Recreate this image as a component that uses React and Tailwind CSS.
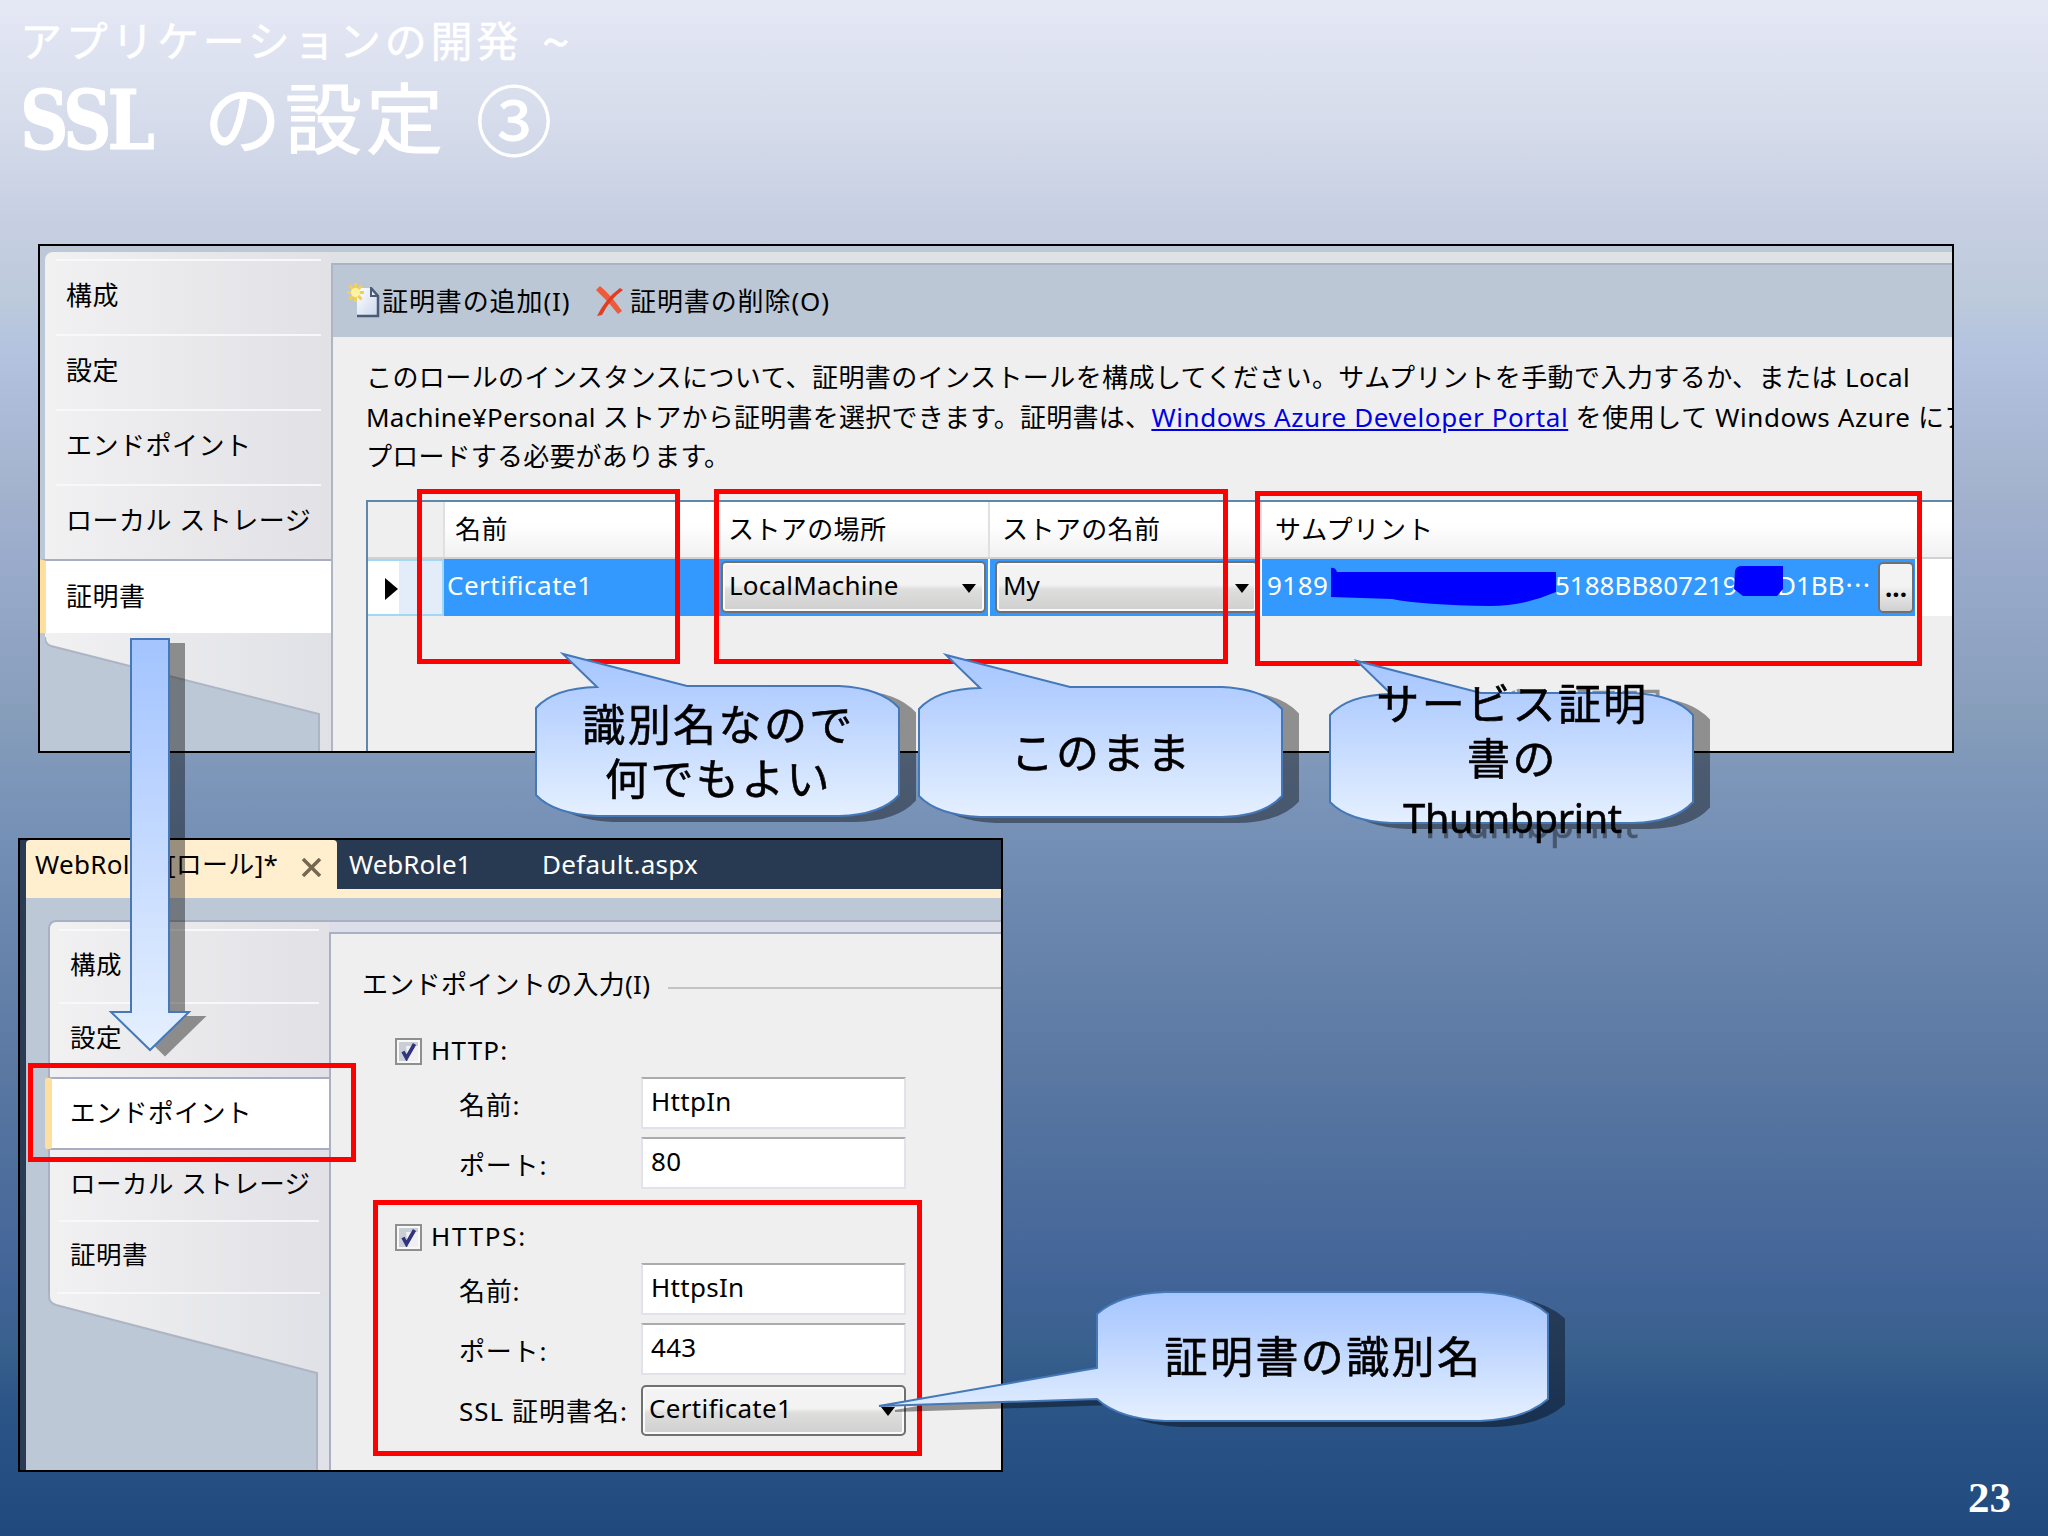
const UI_FONT = "font-['Noto_Sans','Noto_Sans_CJK_JP',sans-serif]";
const JP_FONT = "font-['Noto_Sans_CJK_JP',sans-serif]";

function RedFrame({ className }) {
  return <div className={`absolute border-[5.5px] border-[#ff0000] ${className}`} />;
}

function Callout({ className, width, height, path, id, children }) {
  return (
    <div className={`absolute drop-shadow-[16px_5px_0_rgba(0,0,0,0.4)] ${className}`}>
      <svg
        className="absolute inset-0 overflow-visible"
        width={width}
        height={height}
        viewBox={`0 0 ${width} ${height}`}
      >
        <defs>
          <linearGradient id={id} x1="0" y1="0" x2="0" y2="1">
            <stop offset="0" stopColor="#a6c6ff" />
            <stop offset="0.35" stopColor="#bad3ff" />
            <stop offset="1" stopColor="#e5f0ff" />
          </linearGradient>
        </defs>
        <path d={path} fill={`url(#${id})`} stroke="#4478b8" strokeWidth="2" />
      </svg>
      <div
        className={`relative -top-[2px] left-[1px] flex h-full flex-col items-center justify-center whitespace-nowrap text-[43px] leading-[54.5px] tracking-[2.4px] text-black [-webkit-text-stroke:0.6px_black] ${JP_FONT}`}
      >
        {children}
      </div>
    </div>
  );
}

function Combo({ className, children }) {
  return (
    <div
      className={`flex items-center justify-between rounded-[5px] border-2 border-[#707070] bg-linear-to-b from-[#f3f3f3] from-45% via-[#dededd] via-55% to-[#cfcfcf] shadow-[inset_0_0_0_2px_#fafafa] ${className}`}
    >
      <span className="pb-[3px]">{children}</span>
      <svg className="mt-[2px]" width="14" height="9" viewBox="0 0 14 9">
        <path d="M0 0h14L7 9z" fill="#000" />
      </svg>
    </div>
  );
}

function CheckBox() {
  return (
    <span className="flex h-[27px] w-[27px] items-center justify-center border-2 border-[#8e8f8f] bg-[#f8f8f8]">
      <svg width="19" height="19" viewBox="0 0 19 19">
        <rect width="19" height="19" fill="#c9ced6" />
        <path d="M7 4h12v15H9z" fill="#f0f0f2" />
        <path d="M4 9.500l3.500 6.500L15.500 2" fill="none" stroke="#31347c" strokeWidth="3.600" />
      </svg>
    </span>
  );
}

function Field({ label, value, className }) {
  return (
    <div className={`ml-[97px] flex ${className}`}>
      <span className="w-[182px] pt-[6px] leading-[44px] tracking-[0.8px]">{label}</span>
      <span className="h-[52px] w-[265px] border-2 border-[#e2e3ea] border-t-[#ababab] bg-white pl-[8px] leading-[45px]">
        {value}
      </span>
    </div>
  );
}

function CertSidebar() {
  const tabs = ["構成", "設定", "エンドポイント", "ローカル ストレージ"];
  return (
    <div className="flex w-[286px] shrink-0 flex-col tracking-[0.5px]">
      <div className="rounded-tl-[8px] bg-linear-to-r from-[#f1f1f2] to-[#e1e1e6] pt-[7px] text-[26px]">
        {tabs.map((tab) => (
          <div key={tab} className="relative flex h-[75px] items-center pb-[2px] pl-[21px]">
            <div className="absolute top-0 right-[10px] left-[11px] h-[2px] bg-[#f8f8fa]" />
            {tab}
          </div>
        ))}
      </div>
      <div className="-ml-[5px] flex h-[74px] items-center border-t-2 border-l-[6px] border-t-[#a9adc3] border-l-[#ffdf9f] bg-white pb-[1px] pl-[20px] text-[26px]">
        証明書
      </div>
      <svg width="286" height="118" viewBox="0 0 286 118">
        <defs>
          <linearGradient id="tailA" x1="0" y1="0" x2="1" y2="0">
            <stop offset="0" stopColor="#f1f1f2" />
            <stop offset="1" stopColor="#e0e1e6" />
          </linearGradient>
        </defs>
        <path d="M0 0H286V118H275V81L6 13Q0 11 0 4Z" fill="url(#tailA)" />
        <path d="M0 4Q0 11 6 13L274 81V118" fill="none" stroke="#adb5c4" strokeWidth="2" />
      </svg>
    </div>
  );
}

function Toolbar() {
  return (
    <div className="flex h-[74px] items-center border-t-2 border-[#a9b4c4] bg-[#bcc7d6] pl-[14px] text-[26px] tracking-[0.9px]">
      <svg width="34" height="36" viewBox="0 0 34 36">
        <defs>
          <linearGradient id="page" x1="0" y1="0" x2="1" y2="1">
            <stop offset="0" stopColor="#ffffff" />
            <stop offset="1" stopColor="#c9d6ec" />
          </linearGradient>
        </defs>
        <path d="M10 5h14l7 8v20H10z" fill="url(#page)" />
        <path d="M24 5l7 8v20H10" fill="none" stroke="#4b5a78" strokeWidth="2.500" />
        <path d="M24 4v9h7" fill="none" stroke="#4b5a78" strokeWidth="2" />
        <path
          d="M8.500 0v19M0 9.500h17M2.500 2.500l12 14M14.500 2.500l-12 14"
          stroke="#f0cf5a"
          strokeWidth="3"
        />
        <circle cx="8.500" cy="9.500" r="4.500" fill="#fff3a0" />
      </svg>
      <span className="ml-[1px] w-[213px] whitespace-nowrap">証明書の追加(I)</span>
      <svg width="28" height="30" viewBox="0 0 28 30">
        <path d="M1 4L5 0Q16 9 27 25L23 28Q13 15 1 4Z" fill="#ee5a3c" />
        <path d="M25 2L28 4Q15 13 7 29L2 30Q11 12 25 2Z" fill="#e23d20" />
      </svg>
      <span className="ml-[7px] whitespace-nowrap">証明書の削除(O)</span>
    </div>
  );
}

function CertGrid() {
  return (
    <div className="mt-[23px] h-[252px] border-t-2 border-l-2 border-[#5f86ab] text-[26px] whitespace-nowrap">
      <div className="flex h-[57px] items-center border-b-2 border-[#d2d2d4] bg-linear-to-b from-white from-40% to-[#f1f1f2] tracking-[0.4px]">
        <div className="h-full w-[77px] border-r-2 border-[#e0e0e0] bg-[#efefef]" />
        <div className="w-[271px] pl-[10px]">名前</div>
        <div className="flex h-full w-[274px] items-center border-r-2 border-[#e0e0e2] pl-[12px]">ストアの場所</div>
        <div className="flex h-full w-[272px] items-center border-r-2 border-[#e0e0e2] pl-[12px]">ストアの名前</div>
        <div className="pl-[13px] tracking-[0.8px]">サムプリント</div>
      </div>
      <div className="flex h-[57px] bg-white">
        <div className="flex w-[76px] items-center border-y-2 border-r-2 border-[#a3d8f5] bg-linear-to-r from-white from-42% to-[#e3edfa] to-42% pt-[3px] pl-[17px]">
          <svg width="13" height="22" viewBox="0 0 13 22">
            <path d="M0 0l13 11L0 22z" fill="#000" />
          </svg>
        </div>
        <div className="flex w-[272px] items-center bg-[#3399ff] pb-[3px] pl-[3px] tracking-[0.5px] text-white">Certificate1</div>
        <div className="flex w-[274px] items-center border-r-2 border-white bg-[#3399ff] pl-[5px]">
          <Combo className="h-[52px] w-[265px] pr-[8px] pl-[6px] tracking-[0.2px]">LocalMachine</Combo>
        </div>
        <div className="flex w-[272px] items-center border-r-2 border-white bg-[#3399ff] pl-[5px]">
          <Combo className="h-[52px] w-[263px] pr-[7px] pl-[6px]">My</Combo>
        </div>
        <div className="relative flex w-[653px] items-center justify-between bg-[#3399ff] pr-[1px] pl-[5px] text-white">
          <span className="flex pb-[3px]">
            <span className="w-[288px] tracking-[0.5px]">9189</span>
            <span className="w-[222px]">5188BB807219</span>
            <span>D1BB</span>
            <span className="font-['Noto_Sans_CJK_JP'] leading-[35px]">⋯</span>
          </span>
          <span className="flex h-[51px] w-[36px] items-center justify-center rounded-[5px] border-2 border-[#707070] bg-linear-to-b from-[#f3f3f3] from-45% to-[#d0d0d0] font-bold text-black">
            ...
          </span>
          {/* scribbles over the middle of the thumbprint */}
          <svg className="absolute top-0 left-0" width="653" height="57" viewBox="0 0 653 57">
            <path d="M69 9q4-1 6 4H294V33Q262 47 228 47Q160 46 130 40L69 38Z" fill="#0000ff" />
            <path d="M473 12q1-5 7-5h41v23l-6 7h-34l-9-7z" fill="#0000ff" />
          </svg>
        </div>
      </div>
    </div>
  );
}

function CertificateWindow() {
  return (
    <div
      className={`absolute top-[244px] left-[38px] flex h-[509px] w-[1916px] overflow-hidden border-2 border-black bg-[#bcc8d6] pt-[6px] pl-[5px] text-black ${UI_FONT}`}
    >
      <CertSidebar />
      <div className="w-[1621px] shrink-0">
        <div className="h-[11px] bg-[#dfe2e5]" />
        <div className="border-l-2 border-[#b0b5c6]">
          <Toolbar />
          <div className="bg-[#efefef] pt-[21px] pl-[33px]">
            <div className="text-[26px] leading-[39.5px] whitespace-pre">
              <div className="tracking-[0.42px]">このロールのインスタンスについて、証明書のインストールを構成してください。サムプリントを手動で入力するか、または Local</div>
              <div className="tracking-[0.25px]">
                Machine¥Personal ストアから証明書を選択できます。証明書は、
                <span className="tracking-[0.6px] text-[#0000e6] underline">Windows Azure Developer Portal</span>
                <span className="tracking-[0.6px]">{" を使用して Windows Azure にア"}</span>
              </div>
              <div className="tracking-[0.2px]">プロードする必要があります。</div>
            </div>
            <CertGrid />
          </div>
        </div>
      </div>
    </div>
  );
}

function RoleSidebar() {
  return (
    <div className="flex w-[281px] shrink-0 flex-col text-[25.500px] tracking-[0.5px]">
      <div className="rounded-tl-[8px] border-t-2 border-l-2 border-[#aab0c4] bg-linear-to-r from-[#f1f1f2] to-[#e1e1e6] pt-[7px]">
        <div className="relative flex h-[72.500px] items-center pb-[2px] pl-[20px]">
          <div className="absolute top-0 right-[10px] left-[9px] h-[2px] bg-[#f8f8fa]" />
          構成
        </div>
        <div className="relative flex h-[75.500px] items-center pb-[5px] pl-[20px]">
          <div className="absolute top-0 right-[10px] left-[9px] h-[2px] bg-[#f8f8fa]" />
          設定
        </div>
      </div>
      <div className="-ml-[3px] flex h-[73px] items-center rounded-l-[4px] border-y-2 border-l-[7px] border-y-[#a9adc3] border-l-[#ffdf9f] bg-white pb-[3px] pl-[18px]">
        エンドポイント
      </div>
      <div className="border-l-2 border-[#aab0c4] bg-linear-to-r from-[#f1f1f2] to-[#e1e1e6]">
        <div className="flex h-[69.500px] items-center pb-[3px] pl-[20px]">ローカル ストレージ</div>
        <div className="relative flex h-[72.500px] items-center pb-[3px] pl-[20px]">
          <div className="absolute top-0 right-[10px] left-[9px] h-[2px] bg-[#f8f8fa]" />
          証明書
        </div>
      </div>
      <svg width="281" height="178" viewBox="0 0 281 178">
        <path d="M0 0H281V178H270V81L8 13Q1 11 1 4Z" fill="url(#tailA)" />
        <path d="M1 0V4Q1 11 8 13L269 81V178" fill="none" stroke="#adb5c4" strokeWidth="2" />
        <rect x="9" width="263" height="2" fill="#f8f8fa" />
      </svg>
    </div>
  );
}

function EndpointWindow() {
  return (
    <div
      className={`absolute top-[838px] left-[18px] h-[634px] w-[985px] overflow-hidden border-2 border-black text-[26px] tracking-[0.3px] whitespace-nowrap text-black ${UI_FONT}`}
    >
      <div className="h-full border-l-[6px] border-[#2b3b53] bg-[#bcc8d6]">
        <div className="flex h-[49px] items-center bg-[#283a52] leading-[49px] text-white">
          <div className="flex h-full w-[311px] items-center justify-between rounded-t-[4px] bg-[#ffefcf] pr-[15px] pl-[9px] text-black">
            <span>WebRole1 [ロール]*</span>
            <svg className="mt-[5px]" width="21" height="19" viewBox="0 0 21 19">
              <path d="M2 1l17 17M19 1L2 18" stroke="#75684f" strokeWidth="3.500" />
            </svg>
          </div>
          <span className="ml-[12px] w-[193px] tracking-normal">WebRole1</span>
          <span>Default.aspx</span>
        </div>
        <div className="h-[9px] bg-[#ffefcf]" />
        <div className="flex pt-[22px] pl-[22px]">
          <RoleSidebar />
          <div className="w-[672px] border-t-2 border-[#aab0c4]">
            <div className="h-[10px] bg-[#dcdfe9]" />
            <div className="h-[541px] border-t-2 border-l-2 border-[#aab0c4] bg-[#efefef] pt-[31px] pl-[31px]">
              <div className="flex h-[40px] items-center gap-[18px]">
                <span className="-mt-[2px]">エンドポイントの入力(I)</span>
                <div className="mt-[6px] h-[2px] grow bg-[#c3c3c5]" />
              </div>
              <div className="mt-[28px] ml-[33px] flex h-[36px] items-center gap-[9px]">
                <CheckBox />
                <span className="-mt-[2px] tracking-[1.2px]">HTTP:</span>
              </div>
              <Field className="mt-[8px]" label="名前:" value="HttpIn" />
              <Field className="mt-[8px]" label="ポート:" value="80" />
              <div className="mt-[30px] ml-[33px] flex h-[36px] items-center gap-[9px]">
                <CheckBox />
                <span className="-mt-[2px] tracking-[1.7px]">HTTPS:</span>
              </div>
              <Field className="mt-[8px]" label="名前:" value="HttpsIn" />
              <Field className="mt-[8px]" label="ポート:" value="443" />
              <div className="mt-[10px] ml-[97px] flex">
                <span className="w-[182px] pt-[4px] leading-[44px] tracking-[1px]">SSL 証明書名:</span>
                <Combo className="h-[51px] w-[265px] pr-[9px] pb-[1px] pl-[6px]">Certificate1</Combo>
              </div>
            </div>
          </div>
        </div>
      </div>
    </div>
  );
}

function DownArrow() {
  return (
    <svg
      className="absolute top-[637px] left-[108px] overflow-visible drop-shadow-[15px_5px_0_rgba(0,0,0,0.4)]"
      width="84"
      height="416"
      viewBox="0 0 84 416"
    >
      <defs>
        <linearGradient id="arrow" x1="0" y1="0" x2="0" y2="1">
          <stop offset="0" stopColor="#a3c4ff" />
          <stop offset="0.35" stopColor="#bad3ff" />
          <stop offset="1" stopColor="#e5f0ff" />
        </linearGradient>
      </defs>
      <path d="M23 2H61V375H81L42 413L3 375H23Z" fill="url(#arrow)" stroke="#4478b8" strokeWidth="2" />
    </svg>
  );
}

export default function App() {
  return (
    <div className="relative h-[1536px] w-[2048px] overflow-hidden bg-[linear-gradient(to_bottom,#e5e8f5_0px,#d6dceb_120px,#c8d0e3_210px,#bccadb_300px,#b3c3e0_350px,#a3b2cd_490px,#9aabcb_560px,#869dba_720px,#7b95b9_790px,#718cb3_870px,#5a78a2_1070px,#426498_1280px,#38608d_1350px,#2b5487_1410px,#20497e_1536px)]">
      <h1 className={`absolute top-[10px] left-[20px] whitespace-pre text-white ${JP_FONT}`}>
        <div className="flex text-[42px] leading-[58px] tracking-[3.7px] [-webkit-text-stroke:0.5px_white]">
          <span className="w-[522px]">アプリケーションの開発</span>
          <span className="text-[50px]">~</span>
        </div>
        <div className="flex h-[98px] items-center text-[77px] leading-[90px] tracking-[4px] [-webkit-text-stroke:1px_white]">
          <div className="w-[184px]">
            <span className="inline-block origin-left scale-x-[0.82] pt-[6px] font-['DejaVu_Serif'] text-[82px] font-bold tracking-[-5px]">
              SSL
            </span>
          </div>
          <span className="-mt-[4px] w-[272px]">の設定</span>
          <span className="text-[76px] [-webkit-text-stroke:0.8px_white]">③</span>
        </div>
      </h1>

      <CertificateWindow />
      <EndpointWindow />

      <RedFrame className="top-[489px] left-[417px] h-[175px] w-[263px]" />
      <RedFrame className="top-[489px] left-[714px] h-[175px] w-[514px]" />
      <RedFrame className="top-[491px] left-[1255px] h-[175px] w-[667px]" />
      <RedFrame className="top-[1063px] left-[28px] h-[99px] w-[328px]" />
      <RedFrame className="top-[1200px] left-[373px] h-[256px] w-[549px]" />

      <DownArrow />

      <Callout
        id="nameNote"
        className="top-[686px] left-[536px] h-[130px] w-[363px]"
        width={363}
        height={130}
        path="M61 1L27 -32L151 0H303Q345 2 363 22V109Q345 129 303 130H61Q18 128 0 109V22Q18 2 61 1Z"
      >
        <div>識別名なので</div>
        <div>何でもよい</div>
      </Callout>
      <Callout
        id="storeNote"
        className="top-[687px] left-[919px] h-[130px] w-[363px]"
        width={363}
        height={130}
        path="M61 1L27 -32L151 0H303Q345 2 363 22V109Q345 129 303 130H61Q18 128 0 109V22Q18 2 61 1Z"
      >
        <div>このまま</div>
      </Callout>
      <Callout
        id="thumbNote"
        className="top-[693px] left-[1330px] h-[130px] w-[363px]"
        width={363}
        height={130}
        path="M61 1L27 -32L151 0H303Q345 2 363 22V109Q345 129 303 130H61Q18 128 0 109V22Q18 2 61 1Z"
      >
        <div>サービス証明</div>
        <div>書の</div>
        <div className="-mb-[8px] pt-[8px] font-['Noto_Sans',sans-serif] text-[39.5px] tracking-[-0.3px]">Thumbprint</div>
      </Callout>
      <Callout
        id="certNote"
        className="top-[1292px] left-[1097px] h-[129px] w-[451px]"
        width={451}
        height={129}
        path="M0 22Q22 2 68 0H383Q429 2 451 22V107Q429 127 383 129H68Q22 127 0 107L-218 114L0 76Z"
      >
        <div>証明書の識別名</div>
      </Callout>

      <div className="absolute top-[1468px] left-[1968px] font-['Liberation_Serif',serif] text-[43px] leading-[60px] font-bold text-white">
        23
      </div>
    </div>
  );
}
